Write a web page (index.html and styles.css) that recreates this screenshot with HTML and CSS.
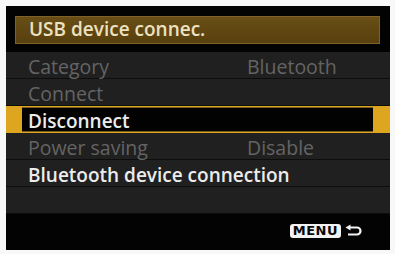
FILE: index.html
```html
<!DOCTYPE html>
<html lang="en">
<head>
    <meta charset="UTF-8">
    <meta name="viewport" content="width=device-width, initial-scale=1.0">
    <title>USB device connec.</title>
    <link rel="stylesheet" href="styles.css">
</head>
<body>
    <div class="screen">
        <div class="title">USB device connec.</div>

        <ul class="menu">
            <li class="row off">
                <span class="label">Category</span>
                <span class="value">Bluetooth</span>
            </li>
            <li class="row off">
                <span class="label">Connect</span>
            </li>
            <li class="row selected">
                <div class="inner">
                    <span class="label">Disconnect</span>
                </div>
            </li>
            <li class="row off">
                <span class="label">Power saving</span>
                <span class="value">Disable</span>
            </li>
            <li class="row">
                <span class="label">Bluetooth device connection</span>
            </li>
            <li class="row"></li>
        </ul>

        <div class="footer">
            <span class="menu-key">MENU</span>
            <svg class="back" width="20" height="14" viewBox="0 0 20 14">
                <path d="M6 3.5 H13 A3.5 3.5 0 0 1 13 10.5 H4" fill="none" stroke="#f2f2f2" stroke-width="2.2"/>
                <path d="M1.5 3.5 L6.5 0.5 L6.5 6.5 Z" fill="#f2f2f2"/>
            </svg>
        </div>
    </div>
</body>
</html>
```

FILE: styles.css
```css
* {
    box-sizing: border-box;
    margin: 0;
    padding: 0;
}

body {
    background-color: rgb(248, 248, 248);
    font-family: "Open Sans", "Noto Sans", sans-serif;
    width: 395px;
    height: 254px;
    padding: 6px 5px 4px 6px;
}

.screen {
    background-color: rgb(3, 3, 3);
    height: 244px;
    padding-top: 10px;
    display: flex;
    flex-direction: column;
}

.title {
    margin: 0 10px 0 9px;
    height: 28px;
    padding-left: 13px;
    font-size: 19px;
    font-weight: 600;
    line-height: 25px;
    color: rgb(236, 226, 192);
    background: linear-gradient(rgb(104, 78, 22), rgb(88, 64, 14));
    border: 1px solid rgb(128, 98, 40);
}

.menu {
    list-style: none;
    margin-top: 8px;
}

.row {
    display: flex;
    height: 27px;
    padding: 4px 0 0 22px;
    font-size: 19px;
    font-weight: 600;
    line-height: 22px;
    color: rgb(236, 236, 236);
    background-color: rgb(32, 32, 32);
    border-bottom: 1px solid rgb(14, 14, 14);
}

.row.off {
    color: rgb(100, 100, 100);
    font-size: 19.5px;
    font-weight: 400;
}

.label {
    width: 219px;
    white-space: nowrap;
}

.row.selected {
    padding: 1px 17px 1px 16px;
    background-color: rgb(222, 166, 30);
    border-bottom: 0;
}

.inner {
    flex: 1;
    padding: 2px 0 0 6px;
    background-color: rgb(2, 2, 2);
    border-top: 1px solid rgb(120, 92, 34);
    border-bottom: 1px solid rgb(120, 92, 34);
}

.footer {
    flex: 1;
    display: flex;
    align-items: center;
    justify-content: flex-end;
    gap: 3px;
    padding: 0 26px 2px 0;
}

.menu-key {
    background-color: rgb(242, 242, 242);
    color: rgb(8, 8, 8);
    font-family: "DejaVu Sans", sans-serif;
    font-weight: bold;
    font-size: 13px;
    line-height: 14px;
    letter-spacing: 0.5px;
    padding: 0 3px;
    border-radius: 3px;
}
```
